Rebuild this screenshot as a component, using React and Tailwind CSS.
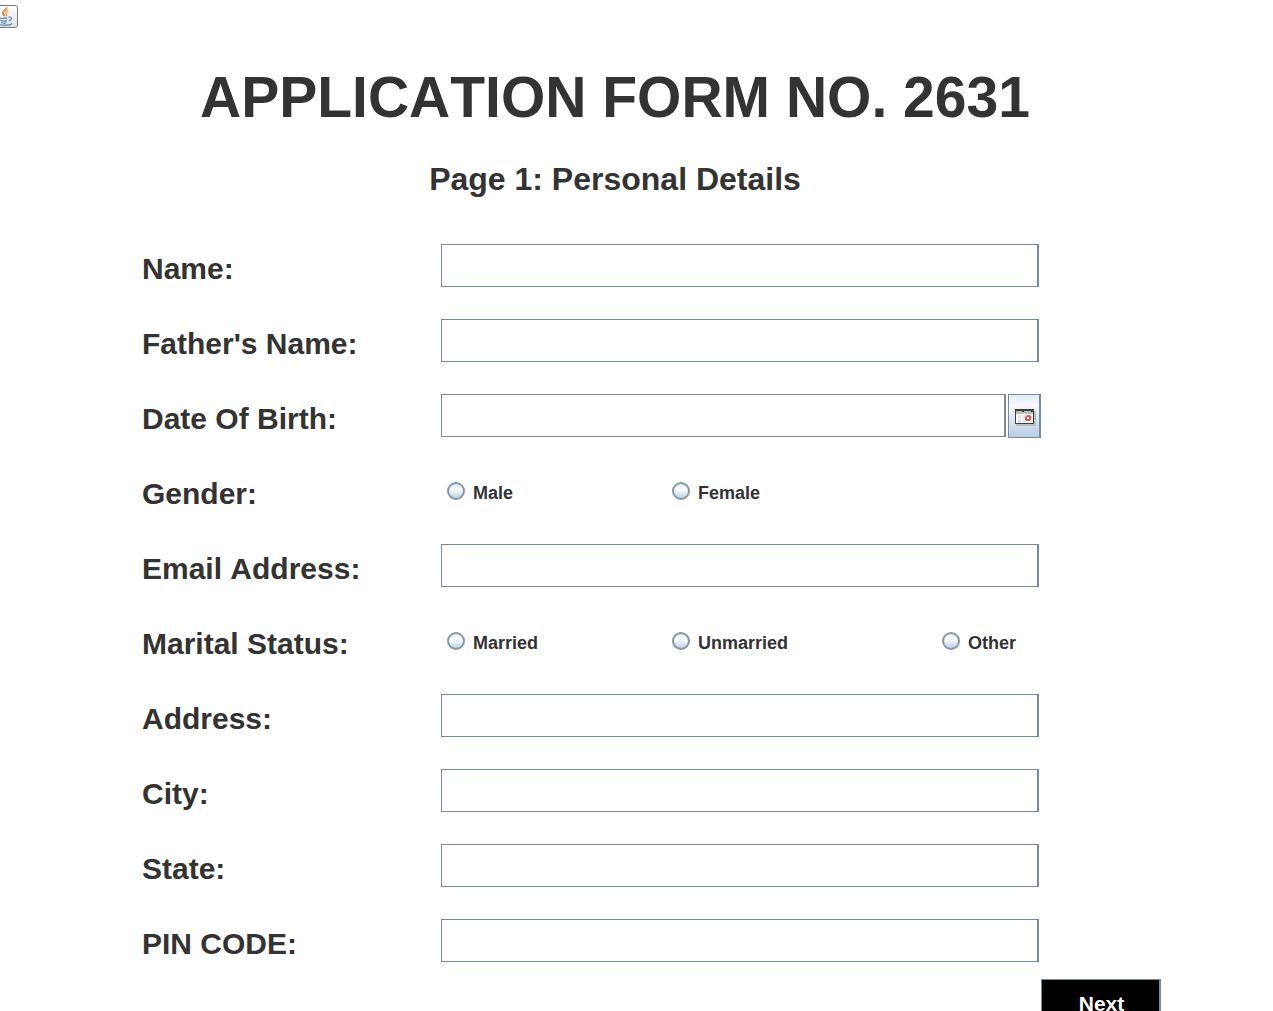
import React from "react";

function JavaIcon() {
  return (
    <svg width="18" height="20" viewBox="0 0 18 20" fill="none" aria-hidden="true">
      <path d="M10.500 0.500c.5 3-4.500 3.500-3.500 6 .4 1.200 1.500 1.500 1.500 2.800" stroke="#e8893a" strokeWidth="2" />
      <path d="M12.300 3.800c-2.500 1-3 2-2 3.200.6.800.3 1.500-.5 2" stroke="#eda35f" strokeWidth="1.500" />
      <path d="M3.800 10c-1.500 1 .7 1.500 4.200 1.300 1.500 0 2.500-.2 3.500-.5M5 13c-.8 1.200 3.500 1.400 6 .5M5.500 15.200c0 1 3 1.200 5 .4" stroke="#6d93ad" strokeWidth="1.400" />
      <path d="M12.500 10.200c4-.7 4 2.300.3 3.600M3 16c-3 1.500 1 2.200 6 2.200 4 0 7-.6 6.500-1.900" stroke="#6d93ad" strokeWidth="1.400" />
    </svg>
  );
}

function CalendarIcon() {
  return (
    <svg width="21" height="17" viewBox="0 0 21 17" shapeRendering="crispEdges" className="shrink-0" aria-hidden="true">
      <path d="M1 2h20v15H1z" fill="#b8bfc4" />
      <path d="M0 0h19v15H0z" fill="#3b413f" />
      <path d="M1 3h17v11H1z" fill="#fff" />
      <path d="M1 2h6v1H1z" fill="#f0b050" />
      <path d="M9 2h7v1H9z" fill="#9cc8e4" />
      <path d="M1 3h17v2H1z" fill="#bcbcbc" />
      <path d="M3 6h3v8H3zM8 6h2v8H8z" fill="#e4e4e4" />
      <path d="M10 6h6v6h-6z" fill="#f3bcbe" />
      <path d="M12 6h3v1h1v2h-2V8h-2v2h2v1h1v1h-4v-1h-1V8h1V7h1z" fill="#e8565b" />
      <path d="M12 8h2v2h-2z" fill="#fff" />
      <path d="M14 9h2v2h-2z" fill="#e8565b" />
    </svg>
  );
}

function Row({ label, htmlFor, children }) {
  return (
    <div className="grid h-[45px] grid-cols-[299px_minmax(0,1fr)] items-start">
      <label htmlFor={htmlFor} className="pt-2 text-[30px] leading-[36px] whitespace-nowrap">
        {label}
      </label>
      {children}
    </div>
  );
}

const inputClass =
  "block h-[43px] w-full min-w-0 border border-r-2 border-[#7a8a99] bg-white px-1 text-[21px] font-normal outline-none";

function TextRow({ label, id }) {
  return (
    <Row label={label} htmlFor={id}>
      <div className="pt-px pr-[2px]">
        <input id={id} type="text" className={inputClass} />
      </div>
    </Row>
  );
}

function RadioRow({ label, name, options }) {
  return (
    <div role="radiogroup" aria-label={label} className="grid h-[45px] grid-cols-[299px_minmax(0,1fr)] items-start">
      <span className="pt-2 text-[30px] leading-[36px] whitespace-nowrap">{label}</span>
      <div className="grid grid-cols-[225px_270px_1fr] pt-[13px]">
        {options.map((option) => (
          <label key={option} className="flex items-start gap-2 pl-[6px] text-[18px] leading-[24px]">
            <input
              type="radio"
              name={name}
              value={option}
              className="mt-px size-[18px] shrink-0 appearance-none rounded-full border-2 border-[#8796a5] bg-linear-to-b from-[#dfe9f3] via-white via-35% to-[#bdd1e4] checked:bg-[#333333]"
            />
            {option}
          </label>
        ))}
      </div>
    </div>
  );
}

export default function App() {
  return (
    <div className="h-screen overflow-hidden bg-white pt-[5px] font-['Liberation_Sans',Arial,sans-serif] font-bold text-[#333333] [font-kerning:none]">
      <button
        type="button"
        aria-label="Java"
        className="-ml-[5px] flex h-[23px] w-[23px] items-center rounded-[3px] border border-[#777b80] bg-linear-to-b from-white to-[#dce3ea]"
      >
        <JavaIcon />
      </button>
      <header className="pt-[36px] pr-[43px] text-center">
        <h1 className="text-[57px] leading-[66px]">APPLICATION FORM NO. 2631</h1>
        <h2 className="pt-[30px] text-[32px] leading-[38px]">Page 1: Personal Details</h2>
      </header>
      <form onSubmit={(e) => e.preventDefault()}>
        <div className="flex flex-col gap-[30px] pt-[45px] pr-[232px] pl-[142px]">
          <TextRow label="Name:" id="name" />
          <TextRow label="Father's Name:" id="father" />
          <Row label="Date Of Birth:" htmlFor="dob">
            <div className="flex gap-[2px] pt-px">
              <input id="dob" type="text" className={inputClass} />
              <button
                type="button"
                aria-label="Choose date"
                className="flex h-[44px] w-[33px] shrink-0 items-center justify-center border border-r-2 border-[#7a8a99] bg-linear-to-b from-[#e3ebf4] via-[#f6f9fc] via-25% to-[#b8cfe5] pt-[2px] pl-[2px]"
              >
                <CalendarIcon />
              </button>
            </div>
          </Row>
          <RadioRow label="Gender:" name="gender" options={["Male", "Female"]} />
          <TextRow label="Email Address:" id="email" />
          <RadioRow label="Marital Status:" name="marital" options={["Married", "Unmarried", "Other"]} />
          <TextRow label="Address:" id="address" />
          <TextRow label="City:" id="city" />
          <TextRow label="State:" id="state" />
          <TextRow label="PIN CODE:" id="pin" />
        </div>
        <div className="flex justify-end pt-4 pr-[112px]">
          <button
            type="submit"
            className="h-[45px] w-[120px] border border-r-2 border-[#7a8a99] bg-black pt-1 pl-[2px] text-[21px] leading-[24px] text-white"
          >
            Next
          </button>
        </div>
      </form>
    </div>
  );
}
